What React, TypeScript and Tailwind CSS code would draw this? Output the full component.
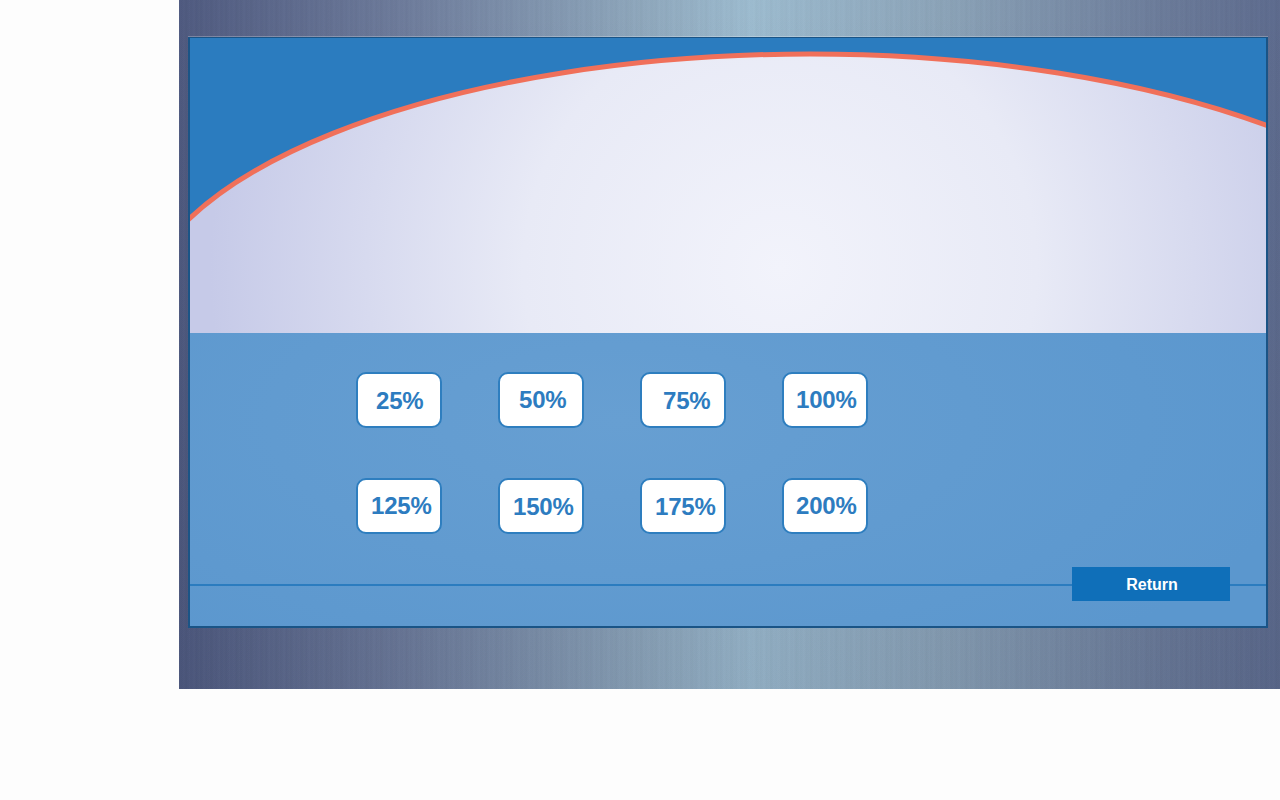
const zoomLevels = [
  { label: '25%', offset: 'pl-[18px] pt-[1px]' },
  { label: '50%', offset: 'pl-[19px]' },
  { label: '75%', offset: 'pl-[21px] pt-[1px]' },
  { label: '100%', offset: 'pl-[12px]' },
  { label: '125%', offset: 'pl-[13px]' },
  { label: '150%', offset: 'pl-[13px] pt-[1px]' },
  { label: '175%', offset: 'pl-[13px] pt-[1px]' },
  { label: '200%', offset: 'pl-[12px]' },
]

function CurvedHeader() {
  return (
    <svg viewBox="0 0 1076 295" className="block h-[295px] w-[1076px]">
      <defs>
        <radialGradient id="sheet" gradientUnits="userSpaceOnUse" cx="590" cy="230" r="570">
          <stop offset="0" stopColor="#f2f3fb" />
          <stop offset="0.45" stopColor="#e8eaf6" />
          <stop offset="1" stopColor="#c6cae8" />
        </radialGradient>
      </defs>
      <ellipse cx="620" cy="286" rx="674" ry="270" fill="url(#sheet)" stroke="#f0705a" strokeWidth="5" />
      <rect x="0" y="286" width="1076" height="9" fill="url(#sheet)" />
    </svg>
  )
}

export default function App() {
  return (
    <div className="flex h-[800px] w-[1280px] items-start bg-[#fdfdfd] font-['Liberation_Sans',Arial,sans-serif]">
      <div className="w-[179px] shrink-0" />
      <div className="h-[689px] w-[1101px] bg-[repeating-linear-gradient(90deg,rgba(255,255,255,0.018)_0px,rgba(0,0,0,0.012)_2px,rgba(255,255,255,0.012)_5px),repeating-linear-gradient(90deg,rgba(0,0,0,0)_0px,rgba(0,0,0,0.015)_7px,rgba(0,0,0,0)_13px),linear-gradient(180deg,rgba(0,0,0,0)_0%,rgba(30,40,70,0.1)_100%),linear-gradient(90deg,#4f5a80_0%,#6d7b9b_20%,#8fa8bd_42%,#9dbcd0_52%,#8ba3b8_70%,#6a7a99_90%,#5d6b8e_100%)] pl-[9px] pt-[37px]">
        <div className="h-[591px] w-[1080px] border-x-2 border-t border-b-2 border-[#1a5486] bg-[#2b7cbf] shadow-[0_-1px_0_rgba(255,255,255,0.25)]">
          <CurvedHeader />
          <div className="h-[293px] bg-[radial-gradient(ellipse_700px_300px_at_40%_30%,#679fd2_0%,#5b97ce_100%)] pt-[39px]">
            <div className="ml-[166px] grid w-[512px] grid-cols-4 gap-x-[56px] gap-y-[50px]">
              {zoomLevels.map((level) => (
                <button
                  key={level.label}
                  className={`h-[56px] w-[86px] rounded-[10px] border-2 border-[#2e7ebf] bg-white text-left text-2xl font-bold tracking-[-0.2px] whitespace-nowrap text-[#2d7cc0] ${level.offset}`}
                >
                  {level.label}
                </button>
              ))}
            </div>
            <div className="mt-[33px] flex items-center">
              <div className="mt-[2px] h-[2px] flex-1 bg-[#2b7cbf]" />
              <button className="h-[34px] w-[158px] bg-[#0f6fb9] pt-[2px] pl-[2px] text-base font-bold text-white">Return</button>
              <div className="mt-[2px] h-[2px] w-[36px] bg-[#2b7cbf]" />
            </div>
          </div>
        </div>
      </div>
    </div>
  )
}
